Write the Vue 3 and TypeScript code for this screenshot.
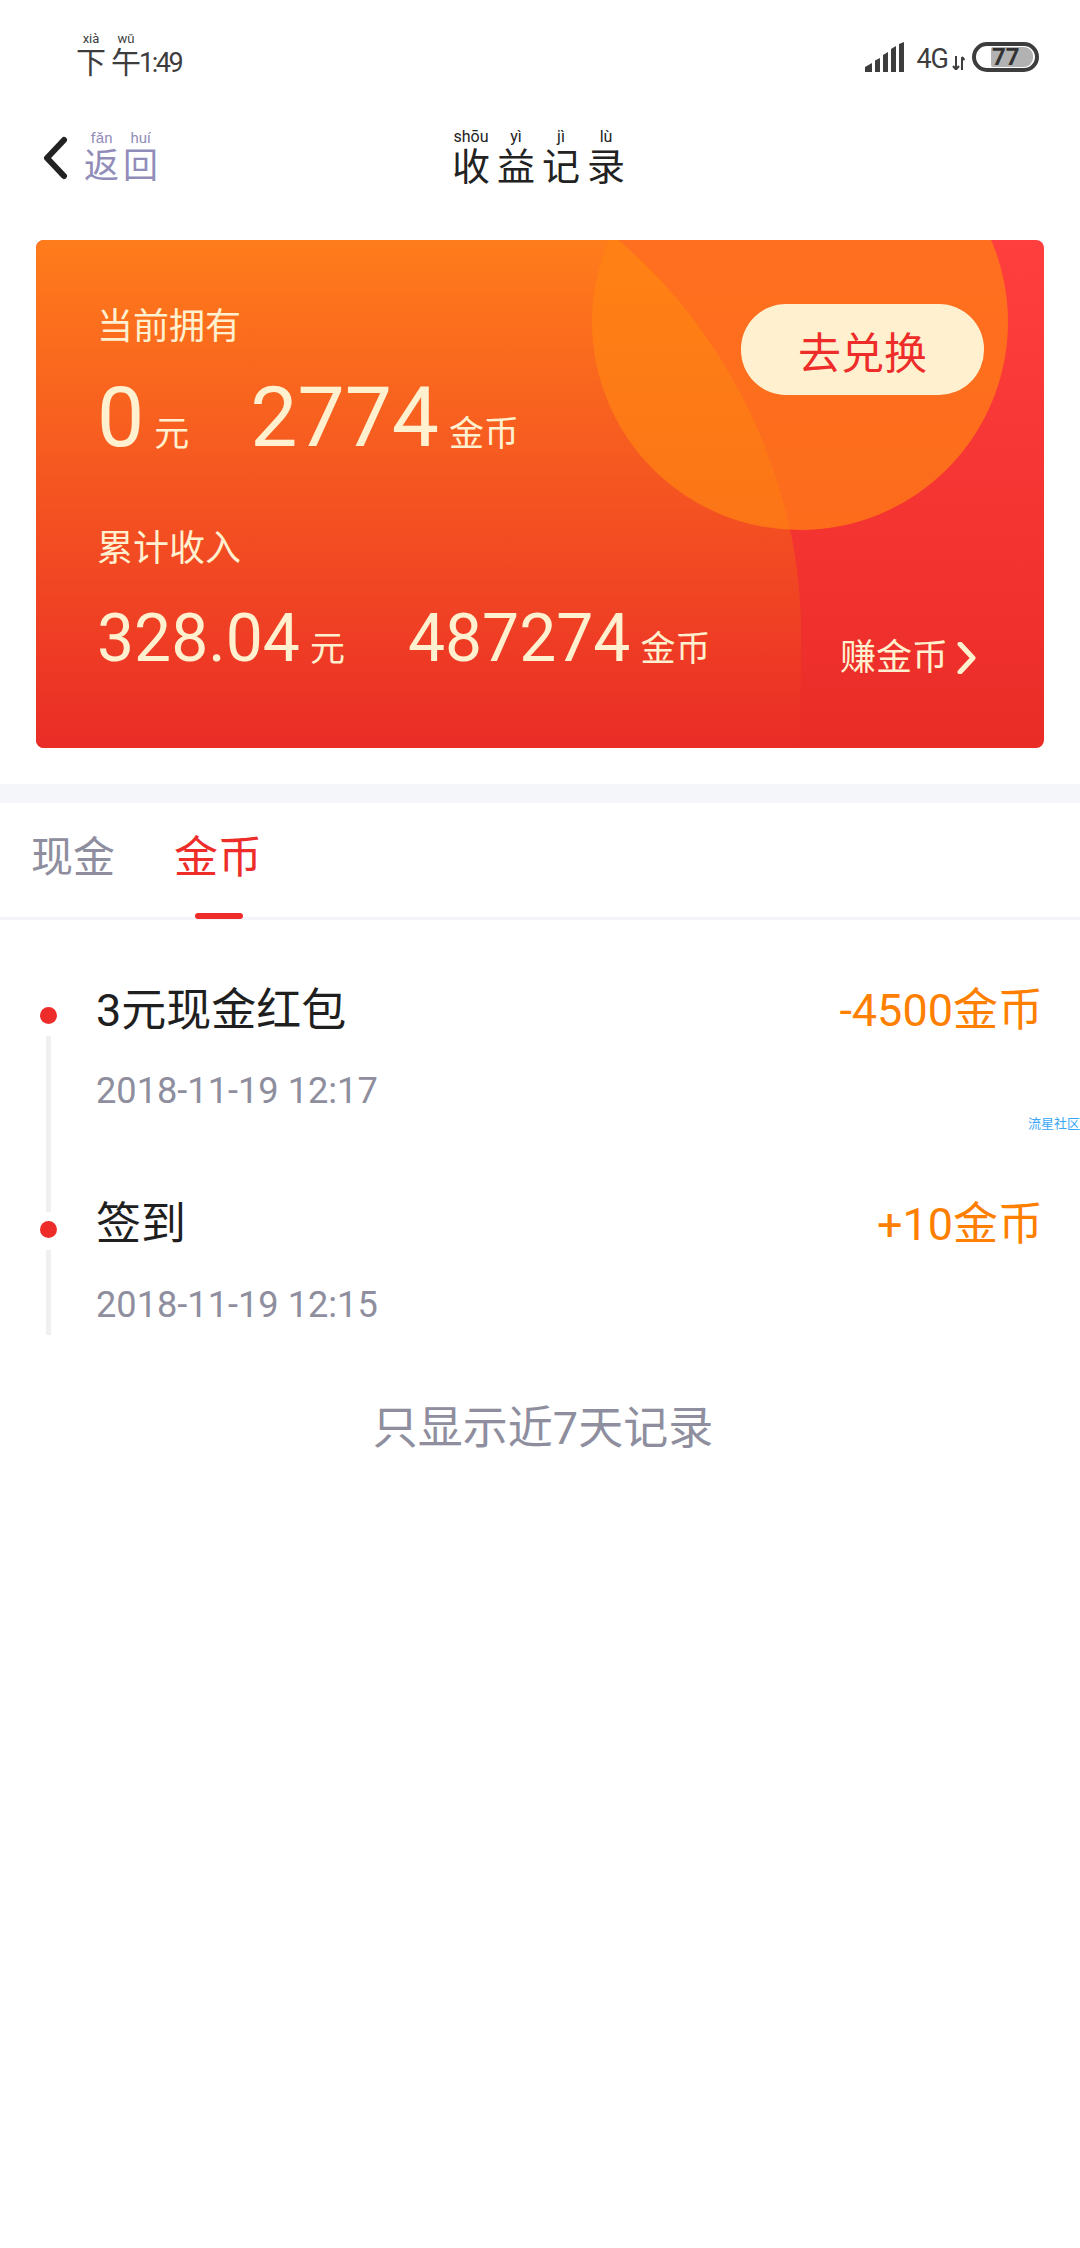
<script setup lang="ts">
interface RubyChar {
  ch: string;
  py: string;
}

interface RecordRow {
  title: string;
  time: string;
  amount: string;
}

const timeChars: RubyChar[] = [
  { ch: '下', py: 'xià' },
  { ch: '午', py: 'wǔ' },
];

const backChars: RubyChar[] = [
  { ch: '返', py: 'fǎn' },
  { ch: '回', py: 'huí' },
];

const titleChars: RubyChar[] = [
  { ch: '收', py: 'shōu' },
  { ch: '益', py: 'yì' },
  { ch: '记', py: 'jì' },
  { ch: '录', py: 'lù' },
];

const records: RecordRow[] = [
  { title: '3元现金红包', time: '2018-11-19 12:17', amount: '-4500金币' },
  { title: '签到', time: '2018-11-19 12:15', amount: '+10金币' },
];
</script>

<template>
  <div class="page">
    <div class="status-bar">
      <div class="clock">
        <ruby v-for="c in timeChars" :key="c.ch">{{ c.ch }}<rt>{{ c.py }}</rt></ruby>
        <span class="clock-time">1:49</span>
      </div>
      <div class="status-right">
        <svg class="signal" width="40" height="30" viewBox="0 0 40 30">
          <path d="M0 30V25L7 21V30Z" fill="#3d3d3d" />
          <path d="M10 30V18.5L15 16V30Z" fill="#3d3d3d" />
          <path d="M18 30V13L23 10V30Z" fill="#3d3d3d" />
          <path d="M26 30V7L31 4V30Z" fill="#3d3d3d" />
          <path d="M34 30V2L39 0V30Z" fill="#3d3d3d" />
        </svg>
        <span class="network">4G</span>
        <svg class="arrows" width="13" height="14" viewBox="0 0 13 14">
          <path d="M4 0V13M1 10L4 13.500L7 10" fill="none" stroke="#3d3d3d" stroke-width="2" />
          <path d="M10 14V1M10 1L12.500 4" fill="none" stroke="#3d3d3d" stroke-width="2" />
        </svg>
        <div class="battery">
          <div class="battery-fill"></div>
          <span class="battery-num">77</span>
        </div>
      </div>
    </div>

    <div class="nav-bar">
      <div class="back">
        <svg class="back-icon" width="26" height="44" viewBox="0 0 26 44">
          <path d="M22 4L5 22L22 40" fill="none" stroke="#222" stroke-width="6" stroke-linecap="round" stroke-linejoin="round" />
        </svg>
        <div class="back-text">
          <ruby v-for="c in backChars" :key="c.ch">{{ c.ch }}<rt>{{ c.py }}</rt></ruby>
        </div>
      </div>
      <div class="nav-title">
        <ruby v-for="c in titleChars" :key="c.ch">{{ c.ch }}<rt>{{ c.py }}</rt></ruby>
      </div>
    </div>

    <div class="card">
      <svg class="card-bg" width="1008" height="508" viewBox="0 0 1008 508">
        <defs>
          <linearGradient id="leafFill" x1="0" y1="0" x2="0" y2="1">
            <stop offset="0" stop-color="#ff7c1b" />
            <stop offset="1" stop-color="#ea2c27" />
          </linearGradient>
          <linearGradient id="redFill" x1="0" y1="0" x2="0" y2="1">
            <stop offset="0" stop-color="#ff3e3e" />
            <stop offset="1" stop-color="#ea2c27" />
          </linearGradient>
        </defs>
        <rect width="1008" height="508" fill="url(#redFill)" />
        <path d="M0 0H582C690 90 765 240 765 391C765 440 764 480 762 508H0Z" fill="url(#leafFill)" />
        <circle cx="764" cy="82" r="208" fill="#ff8412" fill-opacity="0.7" />
      </svg>

      <div class="card-left">
        <div class="card-label">当前拥有</div>
        <div class="amount-row big">
          <span class="num">0</span>
          <span class="unit">元</span>
          <span class="num second">2774</span>
          <span class="unit">金币</span>
        </div>
        <div class="card-label total">累计收入</div>
        <div class="amount-row small">
          <span class="num">328.04</span>
          <span class="unit">元</span>
          <span class="num second">487274</span>
          <span class="unit">金币</span>
        </div>
      </div>

      <div class="card-right">
        <button class="exchange">去兑换</button>
        <div class="earn">
          <span>赚金币</span>
          <svg width="22" height="32" viewBox="0 0 22 32">
            <path d="M5 2L18 16L5 30" fill="none" stroke="#fff0cf" stroke-width="5" stroke-linecap="round" stroke-linejoin="round" />
          </svg>
        </div>
      </div>
    </div>

    <div class="band"></div>

    <div class="tabs">
      <div class="tab">现金</div>
      <div class="tab active">金币</div>
    </div>

    <div class="records">
      <div v-for="r in records" :key="r.time" class="record">
        <div class="rail">
          <span class="dot"></span>
          <span class="rail-line"></span>
        </div>
        <div class="record-body">
          <div class="record-top">
            <span class="record-title">{{ r.title }}</span>
            <span class="record-amount">{{ r.amount }}</span>
          </div>
          <div class="record-time">{{ r.time }}</div>
        </div>
      </div>
    </div>

    <div class="footer-note">只显示近7天记录</div>

    <span class="watermark">流星社区</span>
  </div>
</template>

<style scoped>
.page {
  position: relative;
  width: 1080px;
  height: 2248px;
  background: #fff;
  overflow: hidden;
  font-family: Roboto, "Noto Sans CJK SC", sans-serif;
}

ruby {
  ruby-position: over;
}

rt {
  font-family: Roboto, sans-serif;
  text-align: center;
}

.status-bar {
  display: flex;
  justify-content: space-between;
  align-items: flex-start;
  height: 116px;
  padding: 32px 41px 0 76px;
  box-sizing: border-box;
  color: #3d3d3d;
}

.clock {
  display: flex;
  align-items: flex-end;
  font-size: 30px;
  line-height: 32px;
}

.clock ruby {
  margin-right: 5px;
}

.clock rt {
  font-size: 13px;
  line-height: 13px;
}

.clock-time {
  font-size: 27px;
  letter-spacing: -2.5px;
  margin-left: -7px;
}

.status-right {
  display: flex;
  align-items: flex-end;
  height: 40px;
}

.signal {
  margin-right: 11px;
}

.network {
  font-size: 27px;
  line-height: 26px;
  letter-spacing: -1px;
}

.arrows {
  margin: 0 7px 2px 4px;
}

.battery {
  position: relative;
  width: 67px;
  height: 30px;
  border: 4px solid #3d3d3d;
  border-radius: 15px;
  box-sizing: border-box;
  display: flex;
  align-items: center;
}

.battery-fill {
  width: 42px;
  height: 20px;
  margin-left: 15px;
  background: #b2b2b2;
  border-radius: 2px 9px 9px 2px;
}

.battery-num {
  position: absolute;
  left: 16px;
  top: -2px;
  font-size: 24px;
  line-height: 26px;
  font-weight: 700;
  color: #333;
}

.nav-bar {
  position: relative;
  display: flex;
  justify-content: center;
  align-items: flex-end;
  height: 72px;
  margin-bottom: 52px;
}

.back {
  position: absolute;
  left: 42px;
  bottom: 2px;
  display: flex;
  align-items: flex-end;
  gap: 16px;
}

.back-icon {
  margin-bottom: 6px;
}

.back-text {
  font-size: 35px;
  line-height: 38px;
  color: #918db9;
}

.back-text ruby {
  margin-right: 4px;
}

.back-text rt {
  font-size: 15px;
  line-height: 16px;
}

.nav-title {
  margin-left: -3px;
  font-size: 38px;
  line-height: 42px;
  color: #222;
}

.nav-title ruby {
  margin: 0 3.5px;
}

.nav-title rt {
  font-size: 16px;
  line-height: 16px;
}

.card {
  position: relative;
  display: flex;
  justify-content: space-between;
  width: 1008px;
  height: 508px;
  margin: 0 36px 36px 36px;
  border-radius: 8px;
  overflow: hidden;
  color: #fff0cf;
}

.card-bg {
  position: absolute;
  left: 0;
  top: 0;
}

.card-left {
  position: relative;
  padding: 66px 0 0 61px;
}

.card-label {
  font-size: 36px;
  line-height: 42px;
}

.card-label.total {
  margin-top: 61px;
}

.amount-row {
  display: flex;
  align-items: baseline;
}

.amount-row .unit {
  font-size: 35px;
  margin-left: 10px;
}

.amount-row.big {
  height: 98px;
  margin-top: 21px;
  font-size: 84px;
  line-height: 98px;
}

.amount-row.big .second {
  margin-left: 61px;
}

.amount-row.small {
  height: 80px;
  margin-top: 29px;
  font-size: 66px;
  line-height: 80px;
}

.amount-row.small .second {
  margin-left: 63px;
}

.num {
  line-height: inherit;
}

.card-right {
  position: relative;
  display: flex;
  flex-direction: column;
  align-items: flex-end;
  padding: 64px 60px 0 0;
}

.exchange {
  width: 243px;
  height: 91px;
  border: none;
  border-radius: 45px;
  background: #fff0cf;
  color: #ee2d2a;
  font-family: inherit;
  font-size: 43px;
  padding: 0;
}

.earn {
  display: flex;
  align-items: center;
  gap: 7px;
  margin-top: 240px;
  margin-right: 7px;
  font-size: 36px;
  line-height: 46px;
}

.band {
  height: 19px;
  background: #f5f6fa;
}

.tabs {
  display: flex;
  height: 114px;
  padding-left: 31px;
  gap: 59px;
  border-bottom: 3px solid #f5f5f9;
}

.tab {
  position: relative;
  font-size: 42px;
  line-height: 110px;
  color: #8e8e9e;
}

.tab.active {
  font-size: 44px;
  color: #ee2d2a;
}

.tab.active::after {
  content: "";
  position: absolute;
  left: 21px;
  bottom: -2px;
  width: 48px;
  height: 6px;
  border-radius: 3px;
  background: #ee2d2a;
}

.records {
  padding: 65px 37px 0 40px;
}

.record {
  display: flex;
  height: 214px;
}

.record:last-child {
  height: 136px;
}

.rail {
  display: flex;
  flex-direction: column;
  align-items: center;
  width: 17px;
  padding-top: 22px;
  box-sizing: border-box;
}

.dot {
  flex: none;
  width: 17px;
  height: 17px;
  border-radius: 50%;
  background: #ee2d2a;
}

.rail-line {
  flex: 1;
  width: 5px;
  margin-top: 12px;
  margin-bottom: -13px;
  background: #f0f0f3;
}

.record:last-child .rail-line {
  margin-bottom: 0;
}

.record-body {
  flex: 1;
  padding-left: 39px;
}

.record-top {
  display: flex;
  justify-content: space-between;
  align-items: baseline;
  font-size: 45px;
  line-height: 52px;
}

.record-title {
  color: #1f1f1f;
}

.record-amount {
  color: #ff8000;
}

.record-time {
  margin-top: 32px;
  font-size: 36.2px;
  line-height: 44px;
  color: #8e8e9e;
}

.footer-note {
  margin-top: 66px;
  padding-left: 6px;
  text-align: center;
  font-size: 45px;
  line-height: 56px;
  color: #8e8e9e;
}

.watermark {
  position: absolute;
  right: 0;
  top: 1116px;
  font-size: 13px;
  line-height: 15px;
  color: #3aa6f5;
  white-space: nowrap;
}
</style>
